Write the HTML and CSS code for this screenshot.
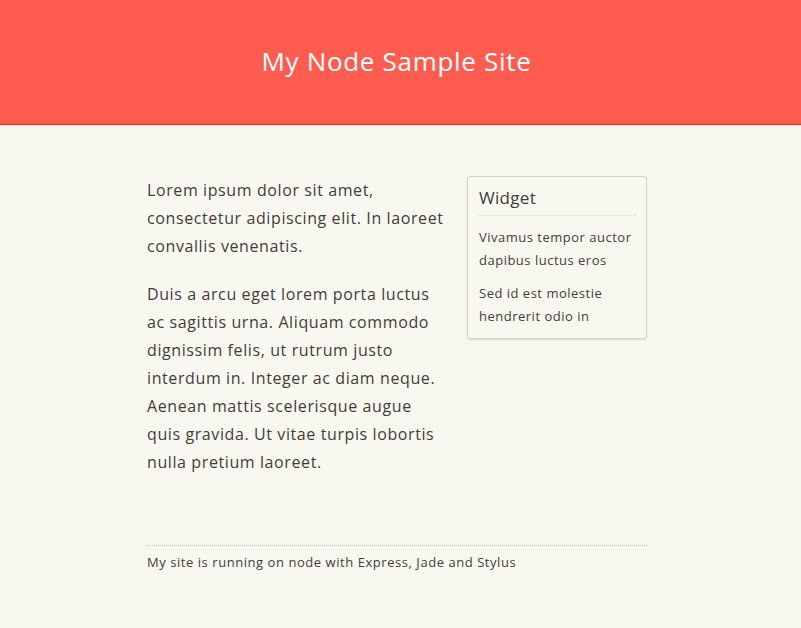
FILE: index.html
```html
<!DOCTYPE html>
<html>
<head>
<meta charset="utf-8">
<link rel="stylesheet" href="styles.css">
</head>
<body>
<header class="site-header">
  <h1 class="site-title">My Node Sample Site</h1>
</header>
<div class="container">
  <div class="content">
    <main class="main">
      <p>Lorem ipsum dolor sit amet, consectetur adipiscing elit. In laoreet convallis venenatis.</p>
      <p>Duis a arcu eget lorem porta luctus ac sagittis urna. Aliquam commodo dignissim felis, ut rutrum justo interdum in. Integer ac diam neque. Aenean mattis scelerisque augue quis gravida. Ut vitae turpis lobortis nulla pretium laoreet.</p>
    </main>
    <aside class="widget">
      <h2 class="widget-title">Widget</h2>
      <p>Vivamus tempor auctor dapibus luctus eros</p>
      <p>Sed id est molestie hendrerit odio in</p>
    </aside>
  </div>
  <footer class="footer">My site is running on node with Express, Jade and Stylus</footer>
</div>
</body>
</html>
```
FILE: styles.css
```css
html, body {
  margin: 0;
  padding: 0;
}
body {
  background: #f8f8f0;
  color: #423d39;
  font-family: "Open Sans", "DejaVu Sans", sans-serif;
}
.site-header {
  background: #ff5c50;
  border-bottom: 1px solid #e8231a;
  height: 124px;
  display: flex;
  align-items: center;
  justify-content: center;
}
.site-title {
  margin: 0 8px 0 0;
  color: #fff;
  font-weight: 400;
  font-size: 26px;
  letter-spacing: 0.7px;
  padding-bottom: 3px;
}
.container {
  width: 500px;
  margin-left: calc(50% - 253.5px);
  padding-top: 51px;
}
.content {
  display: flex;
  gap: 20px;
  align-items: flex-start;
}
.main {
  width: 300px;
}
.main p {
  margin: 0 0 20px;
  font-size: 16px;
  line-height: 28px;
  letter-spacing: 0.6px;
}
.widget {
  width: 180px;
  box-sizing: border-box;
  border: 1px solid #d4d2cc;
  border-radius: 3px;
  box-shadow: 0 1px 2px rgba(0,0,0,0.12);
  padding: 8px 10px 10px 11px;
}
.widget-title {
  margin: 0 0 10px;
  font-weight: 400;
  font-size: 17px;
  line-height: 26px;
  padding-bottom: 4px;
  border-bottom: 1px dotted #d8d6d0;
  letter-spacing: 0.3px;
}
.widget p {
  margin: 0 0 10px;
  font-size: 13px;
  line-height: 23px;
  letter-spacing: 0.5px;
}
.widget p:last-child {
  margin-bottom: 0;
}
.footer {
  margin-top: 49px;
  border-top: 1px dotted #c8c6c0;
  padding-top: 6px;
  font-size: 13px;
  line-height: 20px;
  letter-spacing: 0.55px;
}
```
